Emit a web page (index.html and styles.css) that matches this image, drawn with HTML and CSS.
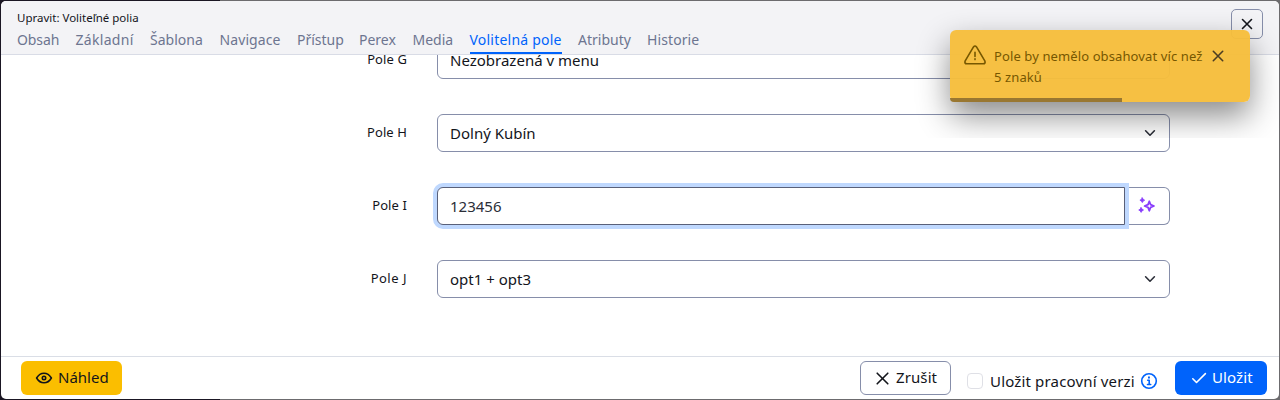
FILE: index.html
```html
<!DOCTYPE html>
<html lang="cs">
<head>
<meta charset="utf-8">
<title>Upravit: Voliteľné polia</title>
<link rel="stylesheet" href="styles.css">
</head>
<body>
<div class="dialog">
  <header class="header">
    <div class="title">Upravit: Voliteľné polia</div>
    <nav class="tabs">
      <a class="tab t-obsah">Obsah</a><a class="tab t-zakladni">Základní</a><a class="tab t-sablona">Šablona</a><a class="tab t-navigace">Navigace</a><a class="tab t-pristup">Přístup</a><a class="tab t-perex">Perex</a><a class="tab t-media">Media</a><a class="tab t-volitelna active">Volitelná pole</a><a class="tab t-atributy">Atributy</a><a class="tab t-historie">Historie</a>
    </nav>
    <button class="close" aria-label="Zavřít"><svg width="12" height="12" viewBox="0 0 12 12"><path d="M1.5 1.5l9 9M10.500 1.500l-9 9"/></svg></button>
  </header>
  <main class="body">
    <div class="row"><label>Pole G</label><div class="field"><span class="v-g">Nezobrazená v menu</span></div></div>
    <div class="row"><label>Pole H</label><div class="field"><span class="v-h">Dolný Kubín</span><svg class="chevron" width="12" height="8" viewBox="0 0 12 8"><path d="M1.600 1.800L6 6.200l4.400-4.400"/></svg></div></div>
    <div class="row"><label>Pole I</label><div class="group"><div class="field focused"><span class="v-i">123456</span></div><button class="magic" aria-label="AI"><svg width="18" height="18" viewBox="0 0 18 18"><path class="star" d="M11.300 4.300l1.300 3.300L16 9l-3.400 1.400-1.300 3.300L10 10.400 6.600 9 10 7.600z"/><path class="spark" d="M4.300.8l.9 1.500 1.500.9-1.500.9-.9 1.500-.9-1.500-1.500-.9 1.500-.9zM3.100 10.600l.9 1.500 1.500.9-1.500.9-.9 1.500-.9-1.500L.7 13l1.500-.9z"/></svg></button></div></div>
    <div class="row"><label class="l-j">Pole J</label><div class="field"><span class="v-j">opt1 + opt3</span><svg class="chevron" width="12" height="8" viewBox="0 0 12 8"><path d="M1.600 1.800L6 6.200l4.400-4.400"/></svg></div></div>
  </main>
  <footer class="footer">
    <button class="btn preview"><svg width="18" height="14" viewBox="0 0 18 14"><path d="M1.600 7C3.400 4 5.800 2.200 9 2.200S14.600 4 16.400 7C14.600 10 12.200 11.800 9 11.800S3.400 10 1.600 7z"/><circle cx="9" cy="7" r="1.700"/></svg><span>Náhled</span></button>
    <button class="btn cancel"><svg width="13" height="13" viewBox="0 0 13 13"><path d="M1.200 1.200l10.600 10.600M11.800 1.200L1.200 11.800"/></svg><span>Zrušit</span></button>
    <label class="draft"><span class="check"></span><span class="draft-text">Uložit pracovní verzi</span><svg width="18" height="18" viewBox="0 0 18 18"><circle cx="9" cy="9" r="7.300"/><path d="M7.700 8.300H9.200v4M7.500 12.500h3.200"/><path class="dot" d="M8 4.600h1.900v1.900H8z"/></svg></label>
    <button class="btn save"><svg width="16" height="12" viewBox="0 0 16 12"><path d="M1.800 6.800l3.700 3.700 8.900-8.900"/></svg><span>Uložit</span></button>
  </footer>
</div>
<div class="toast" role="alert">
  <svg class="warn" width="22" height="20" viewBox="0 0 22 20"><path d="M9.500 1.900Q11 0 12.500 1.900L20.800 15.800Q21.800 18.700 19.200 18.800H2.800Q.2 18.700 1.200 15.800z"/><path d="M11 7.200v4.200M11 13.800v.8"/></svg>
  <div class="message"><span class="m1">Pole by nemělo obsahovat víc než</span><br><span class="m2">5 znaků</span></div>
  <svg class="dismiss" width="12" height="12" viewBox="0 0 12 12"><path d="M1.300 1.300l9.400 9.400M10.700 1.300l-9.400 9.400"/></svg>
  <div class="progress"></div>
</div>
</body>
</html>
```
FILE: styles.css
```css
* { box-sizing: border-box; }
body {
  margin: 0; height: 400px; padding: 1px; overflow: hidden; position: relative;
  background: linear-gradient(90deg, #1a1623 220px, #6c6b6e 220px);
  font-family: "Noto Sans", "Open Sans", sans-serif; color: #13151b;
}
button { font: inherit; padding: 0; }
svg { fill: none; stroke: currentColor; stroke-width: 1.6; stroke-linecap: round; stroke-linejoin: round; flex: none; display: block; }
.dialog { height: 398px; border-radius: 5px; background: #fff; overflow: hidden; display: flex; flex-direction: column; }
.header { position: relative; flex: none; height: 54px; background: #f3f3f6; border-bottom: 1px solid #d9dce6; padding: 8px 16px 0; }
.title { font-size: 11.5px; line-height: 17px; white-space: nowrap; }
.tabs { display: flex; gap: 16px; height: 28px; }
.tab { font-size: 14px; line-height: 27px; height: 28px; color: #6d7590; white-space: nowrap; border-bottom: 2px solid transparent; }
.active { color: #0063fb; border-bottom-color: #0063fb; }
.t-obsah { width: 42.5px; letter-spacing: -.1px; }
.t-zakladni { width: 58.5px; letter-spacing: .3px; }
.t-sablona { width: 53.5px; }
.t-navigace { width: 61.5px; letter-spacing: .1px; }
.t-pristup { width: 46px; }
.t-perex { width: 37.5px; }
.t-media { width: 41px; }
.t-volitelna { width: 92.5px; letter-spacing: .22px; }
.t-atributy { width: 53px; }
.t-historie { width: 53px; letter-spacing: .1px; }
.close { position: absolute; right: 16px; top: 8px; width: 32px; height: 30px; border: 1px solid #868eaa; border-radius: 5px; background: #f3f3f6; display: flex; align-items: center; justify-content: center; color: #13151b; }
.body { flex: 1; min-height: 0; overflow: hidden; display: flex; flex-direction: column; gap: 35px; }
.row { flex: none; display: grid; grid-template-columns: 406px 733px; column-gap: 30px; height: 38px; }
.row:first-child { margin-top: -14px; }
.row > label { font-size: 13px; line-height: 37px; text-align: right; letter-spacing: .1px; }
.row > .l-j { letter-spacing: .5px; }
.field { height: 38px; border: 1px solid #868eaa; border-radius: 6px; padding: 0 13px 0 12px; display: flex; align-items: center; justify-content: space-between; background: #fff; font-size: 15px; line-height: 36px; white-space: nowrap; color: #13151b; }
.chevron { color: #2b2e38; }
.group { display: flex; }
.focused { width: 688px; border-color: #596079; border-radius: 6px 0 0 6px; box-shadow: 0 0 0 4px #bfd8fe; position: relative; color: #2b2e38; }
.magic { width: 45px; height: 38px; border: 1px solid #868eaa; border-left: 0; border-radius: 0 6px 6px 0; background: #fff; color: #8a3ffc; display: flex; align-items: center; justify-content: center; }
.star { stroke-width: 1.8; }
.spark { fill: currentColor; stroke-width: .8; }
.footer { flex: none; height: 43px; border-top: 1px solid #dadee6; padding: 4px 12px 0 20px; display: flex; align-items: flex-start; }
.btn { height: 34px; border: 1px solid transparent; border-radius: 6px; display: flex; align-items: center; font-size: 15px; line-height: 30px; white-space: nowrap; }
.btn span { height: 32px; }
.preview { width: 101px; background: #fbbe00; color: #13151b; padding-left: 13px; gap: 5px; margin-right: auto; }
.cancel { width: 91px; background: #fff; border-color: #868eaa; color: #13151b; padding-left: 15px; gap: 7px; letter-spacing: .1px; }
.draft { display: flex; align-items: center; width: 192px; margin: 8px 16px 0; height: 24px; font-size: 15px; white-space: nowrap; }
.check { width: 16px; height: 16px; border: 1px solid #dfe0e6; border-radius: 4px; margin-right: 7px; flex: none; }
.draft-text { width: 150px; letter-spacing: .16px; }
.draft svg { color: #0063fb; }
.draft .dot { fill: currentColor; stroke: none; }
.save { width: 92px; background: #0063fb; color: #fff; padding-left: 15px; gap: 5px; letter-spacing: .1px; }
.toast { position: absolute; left: 950px; top: 30px; width: 300px; height: 72px; border-radius: 6px; background: rgba(246, 189, 59, .96); color: #765700; box-shadow: 0 14px 32px rgba(0, 0, 0, .46); clip-path: inset(-30px -40px -36px -40px); display: flex; align-items: flex-start; padding: 15px 26px 0 14px; }
.message { width: 222px; padding: 1px 0 0 8px; margin-right: 4px; font-size: 13px; line-height: 21px; white-space: nowrap; letter-spacing: .11px; flex: none; }
.dismiss { margin-top: 5px; color: #4c3d22; }
.progress { position: absolute; left: 0; bottom: 0; width: 172px; height: 4px; background: #997731; border-bottom-left-radius: 6px; }
```
